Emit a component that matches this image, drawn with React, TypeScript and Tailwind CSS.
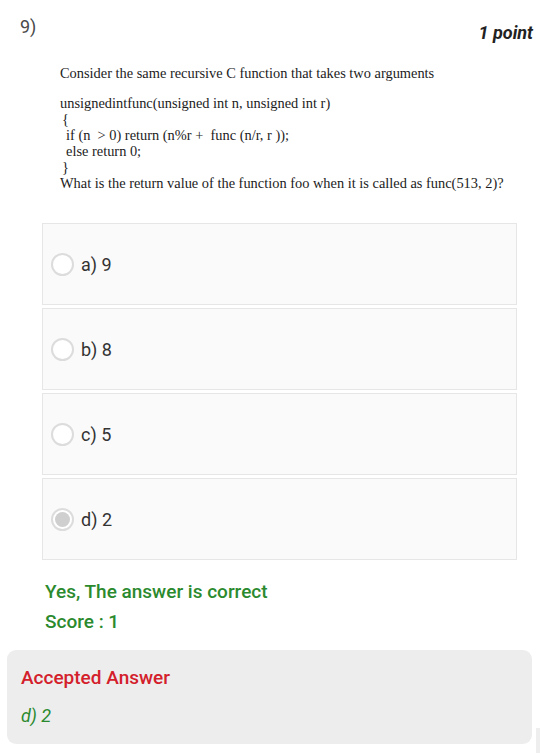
import React from "react";

const options = [
  { label: "a) 9", selected: false },
  { label: "b) 8", selected: false },
  { label: "c) 5", selected: false },
  { label: "d) 2", selected: true },
];

function Radio({ selected }: { selected: boolean }) {
  return (
    <div className="w-[23px] h-[23px] rounded-full border-2 border-[#dcdcdc] bg-white flex items-center justify-center shrink-0">
      {selected && <div className="w-[15px] h-[15px] rounded-full bg-[#cfcfcf]" />}
    </div>
  );
}

export default function App() {
  return (
    <div className="relative w-[540px] h-[753px] bg-white overflow-hidden font-['Roboto',sans-serif]">
      <div className="flex justify-between items-start pl-[20px] pr-[7px] pt-[16px]">
        <span className="text-[18px] leading-[21px] text-[#4a4a4a]">9)</span>
        <span className="mt-[6px] text-[18px] leading-[21px] font-bold italic text-[#222]">1 point</span>
      </div>

      <div className="pl-[60px] mt-[22px] font-['Liberation_Serif',serif] text-[14.4px] text-[#1c1c1c]">
        <div className="leading-[16px]">Consider the same recursive C function that takes two arguments</div>
        <div className="leading-[16px] mt-[14px]">unsignedintfunc(unsigned int n, unsigned int r)</div>
        <div className="leading-[16px] pl-[2px]">{"{"}</div>
        <div className="leading-[16px] pl-[6px]">if (n &nbsp;&gt; 0) return (n%r + &nbsp;func (n/r, r ));</div>
        <div className="leading-[16px] pl-[6px]">else return 0;</div>
        <div className="leading-[16px] pl-[2px]">{"}"}</div>
        <div className="leading-[16px]">What is the return value of the function foo when it is called as func(513, 2)?</div>
      </div>

      <div className="ml-[42px] w-[475px] mt-[32px] flex flex-col gap-[3px]">
        {options.map((o) => (
          <div
            key={o.label}
            className="h-[82px] bg-[#fafafa] border border-[#e6e6e6] flex items-center pl-[8px] gap-[7px]"
          >
            <Radio selected={o.selected} />
            <span className="text-[18px] text-[#333]">{o.label}</span>
          </div>
        ))}
      </div>

      <div className="pl-[45px] mt-[20px] text-[#2b8a2e] font-medium text-[19px]">
        <div className="leading-[24px]">Yes, The answer is correct</div>
        <div className="leading-[24px] mt-[6px]">Score : 1</div>
      </div>

      <div className="ml-[7px] w-[525px] h-[94px] mt-[16px] rounded-[9px] bg-[#ededed] pl-[14px] pt-[16px]">
        <div className="text-[19px] leading-[24px] font-medium text-[#d3202b]">Accepted Answer</div>
        <div className="text-[18px] leading-[24px] italic text-[#2b8a2e] mt-[14px]">d) 2</div>
      </div>

      <div className="absolute right-0 top-[728px] w-[4px] h-[25px] bg-[#eeeeee]" />
    </div>
  );
}
